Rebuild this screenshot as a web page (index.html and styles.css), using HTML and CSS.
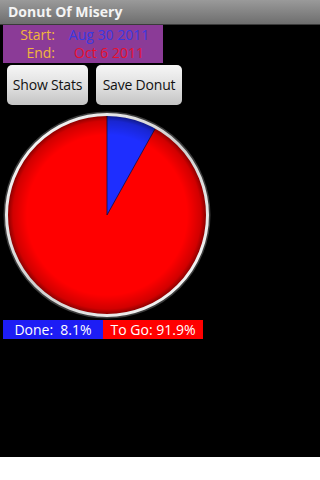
FILE: index.html
```html
<!DOCTYPE html>
<html>
<head>
<meta charset="utf-8">
<link rel="stylesheet" href="styles.css">
</head>
<body>
<div class="screen">
  <div class="titlebar">Donut Of Misery</div>
  <div class="dates">
    <div class="row"><span class="label">Start:</span><span class="value start">Aug 30 2011</span></div>
    <div class="row"><span class="label">End:</span><span class="value end">Oct 6 2011</span></div>
  </div>
  <div class="buttons">
    <div class="btn btn-stats">Show Stats</div>
    <div class="btn btn-save">Save Donut</div>
  </div>
  <div class="pie">
    <svg width="208" height="208" viewBox="0 0 208 208">
      <defs>
        <radialGradient id="shade" cx="104" cy="104" r="100" gradientUnits="userSpaceOnUse">
          <stop offset="0.8" stop-color="#000" stop-opacity="0"/>
          <stop offset="0.94" stop-color="#000" stop-opacity="0.18"/>
          <stop offset="1" stop-color="#000" stop-opacity="0.5"/>
        </radialGradient>
        <linearGradient id="ring" x1="0" y1="0" x2="1" y2="1">
          <stop offset="0" stop-color="#ffffff"/>
          <stop offset="0.5" stop-color="#cfcfcf"/>
          <stop offset="1" stop-color="#ffffff"/>
        </linearGradient>
      </defs>
      <circle cx="104" cy="104" r="102.5" fill="none" stroke="#777" stroke-width="2" opacity="0.5"/>
      <circle cx="104" cy="104" r="100" fill="#ff0000"/>
      <path d="M104 104 L104 4 A100 100 0 0 1 152.7 16.7 Z" fill="#1e2eff" stroke="#101040" stroke-width="0.8"/>
      <circle cx="104" cy="104" r="100" fill="url(#shade)"/>
      <circle cx="104" cy="104" r="100.5" fill="none" stroke="url(#ring)" stroke-width="3"/>
    </svg>
  </div>
  <div class="stats">
    <div class="done">Done:&nbsp; 8.1%</div>
    <div class="togo">To Go: 91.9%</div>
  </div>
</div>
</body>
</html>
```
FILE: styles.css
```css
html, body {
  margin: 0;
  padding: 0;
  background: #ffffff;
}
.screen {
  width: 320px;
  height: 457px;
  background: #000000;
  font-family: "Open Sans", "DejaVu Sans", sans-serif;
  overflow: hidden;
}
.titlebar {
  height: 25px;
  box-sizing: border-box;
  padding-left: 8px;
  background: linear-gradient(#9a9a9a, #6e6e6e);
  color: #f4f4f4;
  font-weight: bold;
  font-size: 14px;
  line-height: 24px;
  border-bottom: 1px solid #3a3a3a;
}
.dates {
  margin-left: 3px;
  width: 160px;
  height: 38px;
  background: #8b3b97;
  display: flex;
  flex-direction: column;
  justify-content: center;
}
.row {
  display: flex;
  height: 18px;
  line-height: 18px;
  font-size: 14px;
}
.label {
  width: 52px;
  text-align: right;
  color: #f2b53c;
}
.value {
  width: 108px;
  text-align: center;
}
.start { color: #3a3ae0; }
.end { color: #e8102c; }
.buttons {
  display: flex;
  gap: 8px;
  padding-left: 7px;
  margin-top: 2px;
}
.btn {
  height: 40px;
  box-sizing: border-box;
  border-radius: 5px;
  background: linear-gradient(#f6f6f6, #dcdcdc 60%, #c4c4c4);
  color: #111;
  font-size: 14px;
  line-height: 40px;
  text-align: center;
  white-space: nowrap;
  letter-spacing: -0.2px;
}
.btn-stats { width: 81px; }
.btn-save { width: 86px; }
.pie {
  margin-top: 6px;
  margin-left: 3px;
  width: 208px;
  height: 208px;
}
.pie svg { display: block; }
.stats {
  margin-top: 1px;
  margin-left: 3px;
  display: flex;
  height: 19px;
  line-height: 19px;
  font-size: 14px;
  color: #ffffff;
}
.done {
  width: 100px;
  background: #1d1df5;
  text-align: center;
}
.togo {
  width: 100px;
  background: #ff0000;
  text-align: center;
}
```
